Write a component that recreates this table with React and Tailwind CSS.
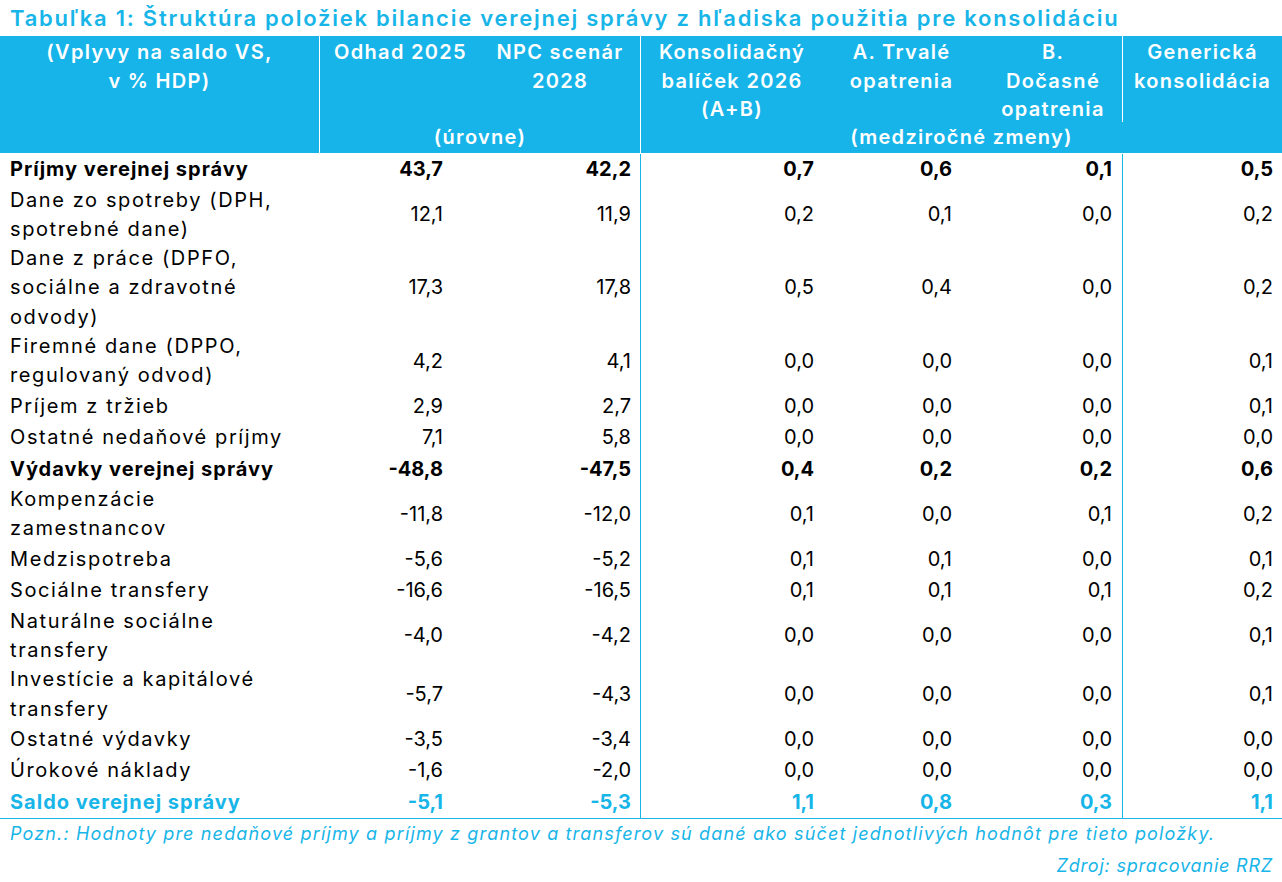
import React from "react";

const rows = [
  { label: ["Príjmy verejnej správy"], v: ["43,7", "42,2", "0,7", "0,6", "0,1", "0,5"], bold: true },
  { label: ["Dane zo spotreby (DPH,", "spotrebné dane)"], v: ["12,1", "11,9", "0,2", "0,1", "0,0", "0,2"] },
  { label: ["Dane z práce (DPFO,", "sociálne a zdravotné", "odvody)"], v: ["17,3", "17,8", "0,5", "0,4", "0,0", "0,2"] },
  { label: ["Firemné dane (DPPO,", "regulovaný odvod)"], v: ["4,2", "4,1", "0,0", "0,0", "0,0", "0,1"] },
  { label: ["Príjem z tržieb"], v: ["2,9", "2,7", "0,0", "0,0", "0,0", "0,1"] },
  { label: ["Ostatné nedaňové príjmy"], v: ["7,1", "5,8", "0,0", "0,0", "0,0", "0,0"] },
  { label: ["Výdavky verejnej správy"], v: ["-48,8", "-47,5", "0,4", "0,2", "0,2", "0,6"], bold: true },
  { label: ["Kompenzácie", "zamestnancov"], v: ["-11,8", "-12,0", "0,1", "0,0", "0,1", "0,2"] },
  { label: ["Medzispotreba"], v: ["-5,6", "-5,2", "0,1", "0,1", "0,0", "0,1"] },
  { label: ["Sociálne transfery"], v: ["-16,6", "-16,5", "0,1", "0,1", "0,1", "0,2"] },
  { label: ["Naturálne sociálne", "transfery"], v: ["-4,0", "-4,2", "0,0", "0,0", "0,0", "0,1"] },
  { label: ["Investície a kapitálové", "transfery"], v: ["-5,7", "-4,3", "0,0", "0,0", "0,0", "0,1"] },
  { label: ["Ostatné výdavky"], v: ["-3,5", "-3,4", "0,0", "0,0", "0,0", "0,0"] },
  { label: ["Úrokové náklady"], v: ["-1,6", "-2,0", "0,0", "0,0", "0,0", "0,0"] },
  { label: ["Saldo verejnej správy"], v: ["-5,1", "-5,3", "1,1", "0,8", "0,3", "1,1"], bold: true, blue: true },
];

const valueCls = [
  "pr-[37px]",
  "pr-[9px] border-r border-[#17b5e8]",
  "pr-[9px]",
  "pr-[10px]",
  "pr-[10px] border-r border-[#17b5e8]",
  "pr-[9px]",
];

function Row({ r, last }) {
  return (
    <div
      className={
        "grid grid-cols-[320px_160px_161px_182px_139px_161px_159px] " +
        (last ? "border-b border-[#17b5e8] " : "") +
        (r.bold ? "font-bold " : "") +
        (r.blue ? "text-[#17b5e8]" : "text-black")
      }
    >
      <div
        className={
          "pl-[10px] min-h-[31.5px] flex flex-col justify-center leading-[29.3px] whitespace-nowrap " +
          (r.bold ? "tracking-[1px]" : "tracking-[1.6px]")
        }
      >
        {r.label.map((l, i) => (
          <span key={i}>{l}</span>
        ))}
      </div>
      {r.v.map((val, i) => (
        <div key={i} className={"flex items-center justify-end leading-[29.3px] " + valueCls[i]}>
          {val}
        </div>
      ))}
    </div>
  );
}

export default function App() {
  return (
    <div className="w-[1282px] h-[882px] bg-white font-['Inter',sans-serif] text-[20px] overflow-hidden">
      <div className="h-[36px] pl-[10px] pt-[1px] flex items-center text-[22px] font-semibold text-[#17b5e8] whitespace-nowrap tracking-[1.75px]">
        Tabuľka 1: Štruktúra položiek bilancie verejnej správy z hľadiska použitia pre konsolidáciu
      </div>
      <div className="grid grid-cols-[320px_160px_161px_182px_139px_161px_159px] grid-rows-[86px_31px] bg-[#16b4e9] text-white font-semibold leading-[28.5px] text-center tracking-[1.3px]">
        <div className="row-span-2 border-r border-white pt-[2px]">
          (Vplyvy na saldo VS,
          <br />v % HDP)
        </div>
        <div className="pt-[2px] pl-[1px]">Odhad 2025</div>
        <div className="pt-[2px] border-r border-white">
          NPC scenár
          <br />
          2028
        </div>
        <div className="pt-[2px]">
          Konsolidačný
          <br />
          balíček 2026
          <br />
          (A+B)
        </div>
        <div className="pt-[2px] pl-[18px]">
          A. Trvalé
          <br />
          opatrenia
        </div>
        <div className="pt-[2px] pl-[22px] border-r border-white">
          B.
          <br />
          Dočasné
          <br />
          opatrenia
        </div>
        <div className="pt-[2px]">
          Generická
          <br />
          konsolidácia
        </div>
        <div className="col-span-2 border-r border-white flex items-center justify-center">(úrovne)</div>
        <div className="col-span-4 flex items-center justify-center">(medziročné zmeny)</div>
      </div>
      <div className="pt-[1px]">
        {rows.map((r, i) => (
          <Row key={i} r={r} last={i === rows.length - 1} />
        ))}
      </div>
      <div className="h-[28px] pl-[10px] flex items-center italic text-[18px] text-[#17b5e8] whitespace-nowrap tracking-[1.15px]">
        Pozn.: Hodnoty pre nedaňové príjmy a príjmy z grantov a transferov sú dané ako súčet jednotlivých hodnôt pre tieto položky.
      </div>
      <div className="h-[36px] pr-[9px] flex items-center justify-end italic text-[18px] text-[#17b5e8] tracking-[0.8px]">
        Zdroj: spracovanie RRZ
      </div>
    </div>
  );
}
